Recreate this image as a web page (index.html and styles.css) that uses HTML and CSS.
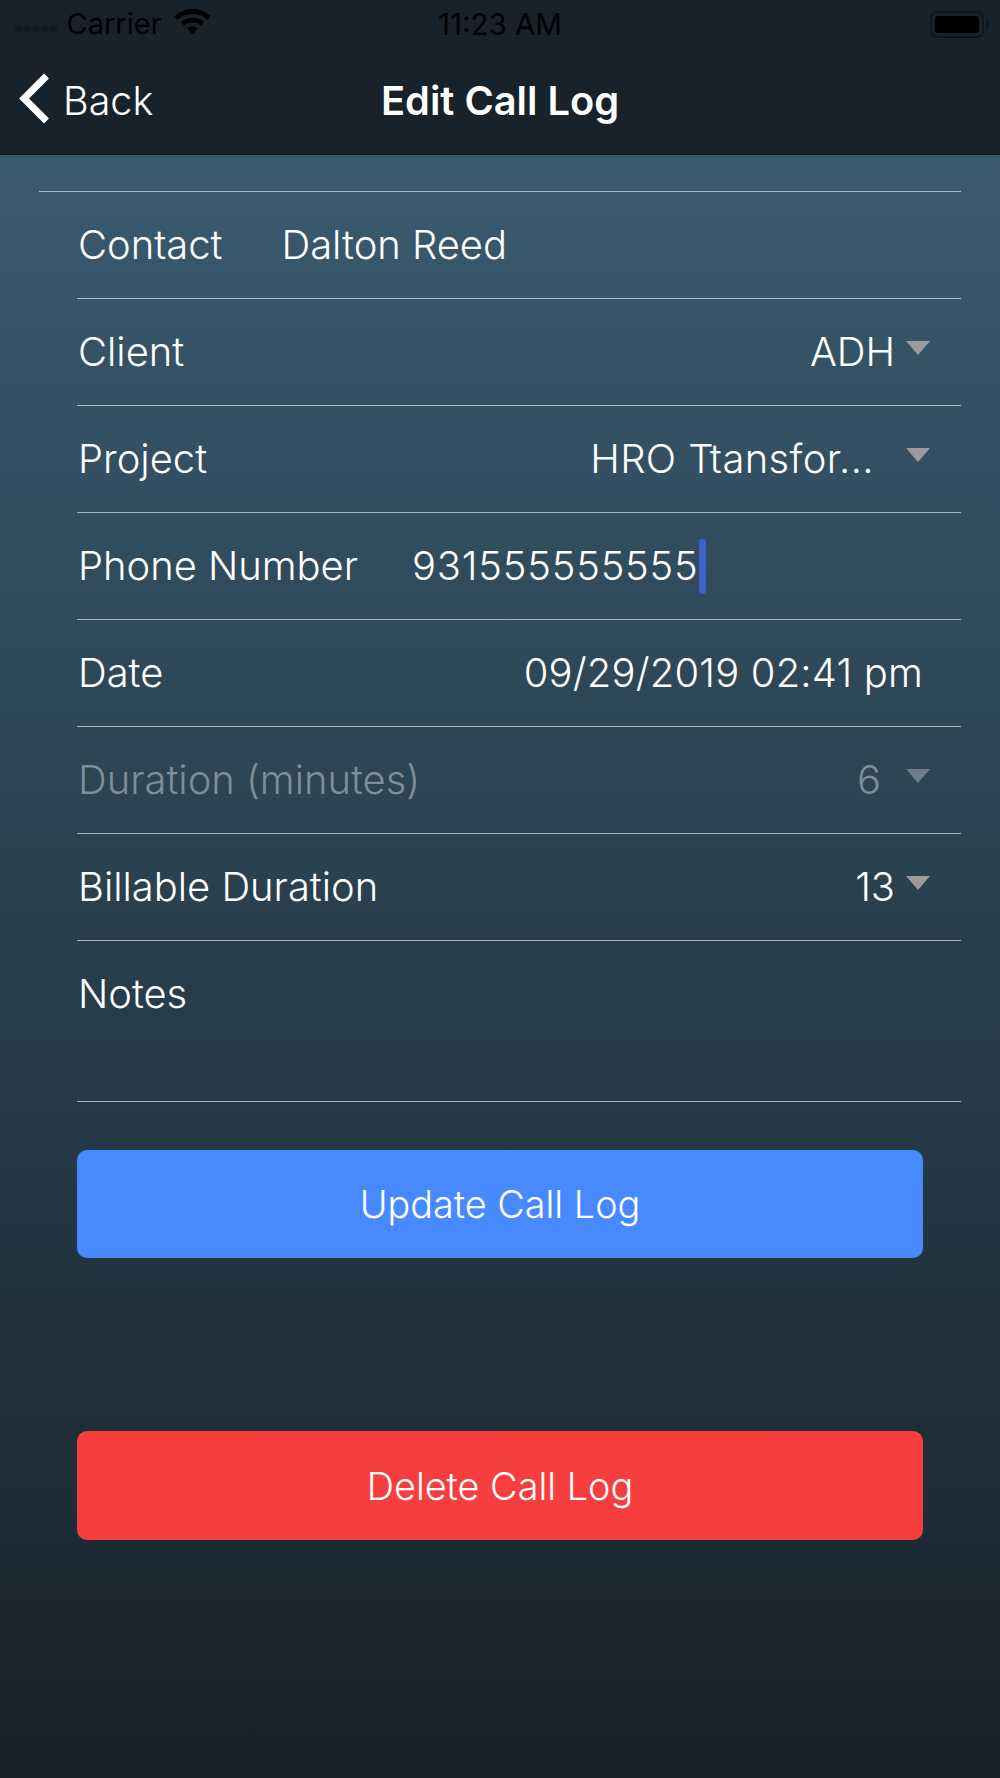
FILE: index.html
```html
<!DOCTYPE html>
<html lang="en">
<head>
<meta charset="utf-8">
<title>Edit Call Log</title>
<link rel="stylesheet" href="styles.css">
</head>
<body>
<header class="top">
  <div class="status">
    <div class="status-left">
      <span class="dots"><i></i><i></i><i></i><i></i><i></i></span>
      <span class="carrier">Carrier</span>
      <svg class="wifi" width="37" height="27" viewBox="0 0 37 27"><path d="M18.5 0C11.5 0 5.3 2.700 0.500 7.200L3.700 10.700C7.600 7.100 12.800 4.800 18.500 4.800S29.400 7.100 33.300 10.700L36.500 7.200C31.700 2.700 25.500 0 18.500 0ZM18.500 8.700C14.100 8.700 10 10.400 7 13.200L10.200 16.700C12.400 14.700 15.300 13.500 18.500 13.500S24.600 14.700 26.800 16.700L30 13.200C27 10.400 22.900 8.700 18.500 8.700ZM18.500 17.300C16.400 17.300 14.600 18.100 13.300 19.300L18.500 25.500L23.700 19.300C22.400 18.100 20.600 17.300 18.500 17.300Z" fill="#000"/></svg>
    </div>
    <span class="time">11:23 AM</span>
    <div class="battery"><span class="battery-body"><span class="battery-fill"></span></span><span class="battery-cap"></span></div>
  </div>
  <nav class="nav">
    <a class="back">
      <svg class="chev" width="32" height="52" viewBox="0 0 32 52"><path d="M27.500 3L5 25.500L27.500 48" fill="none" stroke="#fff" stroke-width="7"/></svg>
      <span>Back</span>
    </a>
    <h1 class="title">Edit Call Log</h1>
  </nav>
</header>
<main class="main">
  <div class="form">
    <div class="row contact"><span class="label">Contact</span><span class="contact-name">Dalton Reed</span></div>
    <div class="row"><span class="label">Client</span><span class="value">ADH</span><span class="caret"></span></div>
    <div class="row"><span class="label">Project</span><span class="value project">HRO Ttansfor...</span><span class="caret"></span></div>
    <div class="row"><span class="label">Phone Number</span><span class="phone">931555555555<span class="cursor"></span></span></div>
    <div class="row"><span class="label">Date</span><span class="value date">09/29/2019 02:41 pm</span></div>
    <div class="row muted"><span class="label">Duration (minutes)</span><span class="value duration">6</span><span class="caret"></span></div>
    <div class="row"><span class="label">Billable Duration</span><span class="value">13</span><span class="caret"></span></div>
    <div class="row notes"><span class="label">Notes</span></div>
  </div>
  <button class="btn update">Update Call Log</button>
  <button class="btn delete">Delete Call Log</button>
</main>
</body>
</html>
```
FILE: styles.css
```css
* { box-sizing: border-box; }
html, body { margin: 0; padding: 0; }
body {
  width: 1000px;
  height: 1778px;
  overflow: hidden;
  font-family: Inter, "Liberation Sans", sans-serif;
  color: #fff;
  background: #17222b;
  display: flex;
  flex-direction: column;
}
.top { height: 155px; background: #17222b; border-bottom: 1px solid #121b22; flex: none; }
.status {
  height: 48px;
  display: flex;
  align-items: center;
  justify-content: space-between;
  padding: 0 11px 0 15px;
  color: #000;
  position: relative;
}
.status-left { display: flex; align-items: center; }
.dots { display: flex; gap: 1px; margin-top: 9px; margin-right: 10px; }
.dots i { width: 7.500px; height: 7.500px; border-radius: 50%; background: #111a21; }
.carrier { font-size: 29px; line-height: 48px; }
.wifi { margin-left: 12px; margin-top: -3px; }
.time { position: absolute; left: 0; right: 0; text-align: center; font-size: 29.500px; line-height: 48px; }
.battery { display: flex; align-items: center; }
.battery-body { width: 54px; height: 27px; border: 2px solid #0e151b; border-radius: 7px; padding: 3px; display: block; }
.battery-fill { display: block; height: 100%; background: #000; border-radius: 3px; }
.battery-cap { width: 3px; height: 9px; margin-left: 2px; background: #0e151b; border-radius: 0 2px 2px 0; }
.nav { position: relative; height: 106px; display: flex; align-items: center; justify-content: center; }
.back { position: absolute; left: 19px; top: 25px; display: flex; align-items: center; gap: 12px; font-size: 39.500px; line-height: 52px; font-weight: 350; }
.back span { position: relative; top: 2px; }
.chev { display: block; }
.title { margin: 0; font-size: 39.800px; font-weight: 600; line-height: 52px; }
.main {
  flex: 1;
  background: linear-gradient(180deg, #3a5a6e 0%, #17222b 100%);
  padding: 36px 39px 0;
  display: flex;
  flex-direction: column;
}
.form { border-top: 1px solid #a9b8c1; }
.row {
  height: 107px;
  margin-left: 38px;
  border-bottom: 1px solid rgba(255,255,255,.6);
  display: flex;
  align-items: center;
  padding-left: 1px;
  padding-bottom: 1px;
  font-size: 39.900px;
  font-weight: 350;
}
.label { white-space: nowrap; }
.contact-name { margin-left: 59px; }
.value { margin-left: auto; margin-right: 11px; }
.project { margin-right: 32px; letter-spacing: .4px; }
.date { margin-right: 38px; letter-spacing: .2px; }
.duration { margin-right: 25px; }
.caret {
  width: 0; height: 0; margin-right: 31px; margin-top: -8px;
  border-left: 12px solid transparent;
  border-right: 12px solid transparent;
  border-top: 14px solid #9b9b9b;
}
.phone { margin-left: 54px; position: relative; letter-spacing: .8px; }
.cursor {
  position: absolute; right: -7px; top: -2px;
  width: 7px; height: 55px; border-radius: 3.500px; background: #3d62cc;
}
.muted { color: #7f8e98; }
.muted .caret { border-top-color: #6e7d87; }
.notes { height: 161px; align-items: flex-start; padding-top: 28px; }
.btn {
  display: block;
  margin: 0 0 0 38px;
  width: 846px;
  border: 0;
  border-radius: 10px;
  color: #fff;
  font: 350 37.800px Inter, "Liberation Sans", sans-serif;
}
.update { height: 108px; margin-top: 48px; background: #478aff; }
.delete { height: 109px; margin-top: 173px; background: #f73e3e; }
```
